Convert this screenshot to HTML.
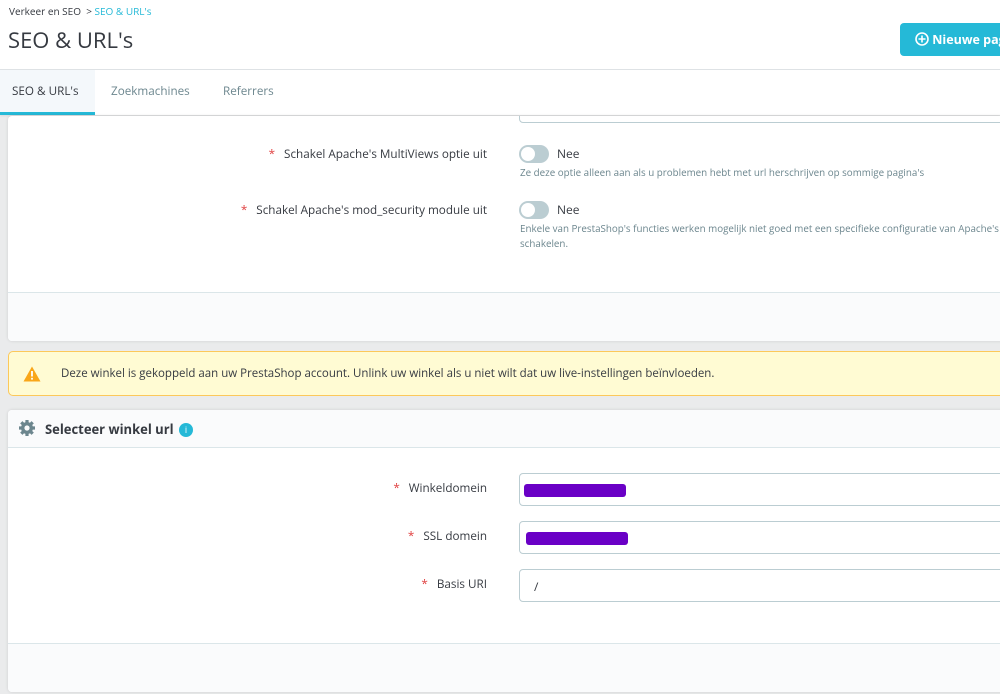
<!DOCTYPE html>
<html><head><meta charset="utf-8"><style>
*{box-sizing:border-box;margin:0;padding:0}
body{width:1000px;height:694px;overflow:hidden;background:#eaebec;font-family:"Open Sans","Liberation Sans",sans-serif;color:#363a41;position:relative}
.abs{position:absolute}
.hdr{left:0;top:0;width:1000px;height:70px;background:#fff;border-bottom:1px solid #dfe3e6}
.tabs{left:0;top:70px;width:1000px;height:45px;background:#fff;box-shadow:0 1px 2px rgba(0,0,0,.08)}
.panel{background:#fff;border-radius:4px 0 0 4px;box-shadow:0 0 3px rgba(0,0,0,.12)}
.lbl{font-size:11.7px;color:#363a41;text-align:right;width:479px;left:8px}
.req{color:#e04040;margin-right:9px}
.sw{width:30px;height:18px;border-radius:9px;background:#bbcdd2;left:519px}
.sw:after{content:"";position:absolute;left:2px;top:2px;width:14px;height:14px;border-radius:50%;background:#fff}
.nee{left:557px;font-size:12px}
.help{left:520px;font-size:9.8px;color:#6c868e;line-height:15px}
.inp{left:519px;width:500px;height:33px;border:1px solid #bbcdd2;border-radius:4px;background:#fff}
.mark{background:#6a00c6;height:13px;border-radius:3px}
</style></head><body>
<div class="abs hdr">
 <div class="abs" style="left:9px;top:4px;font-size:10px;color:#363a41">Verkeer en SEO &nbsp;&gt; <span style="color:#25b9d7">SEO &amp; URL's</span></div>
 <div class="abs" style="left:8px;top:25px;font-size:22px;color:#363a41">SEO &amp; URL's</div>
 <div class="abs" style="left:900px;top:23px;width:110px;height:33px;background:#25b9d7;border-radius:4px;color:#fff;font-size:12.5px;font-weight:bold;padding:8px 0 0 15px;white-space:nowrap">
  <svg width="14" height="14" viewBox="0 0 14 14" style="vertical-align:-2px"><circle cx="7" cy="7" r="6" fill="none" stroke="#fff" stroke-width="1.6"/><path d="M7 3.5v7M3.5 7h7" stroke="#fff" stroke-width="1.6"/></svg> Nieuwe pagina</div>
</div>
<div class="abs tabs">
 <div class="abs" style="left:0;top:0;width:95px;height:45px;background:#f4f8fb;border-bottom:3px solid #25b9d7"></div>
 <div class="abs" style="left:12px;top:13px;font-size:11.7px;color:#363a41">SEO &amp; URL's</div>
 <div class="abs" style="left:111px;top:13px;font-size:11.7px;color:#6c868e">Zoekmachines</div>
 <div class="abs" style="left:223px;top:13px;font-size:11.7px;color:#6c868e">Referrers</div>
</div>
<div class="abs panel" style="left:8px;top:116px;width:1000px;height:225px;overflow:hidden">
 <div class="abs" style="left:511px;top:-20px;width:500px;height:27px;border:1px solid #bbcdd2;border-radius:4px"></div>
 <div class="abs" style="left:0;top:176px;width:1000px;height:49px;background:#fafbfc;border-top:1px solid #dbe6e9"></div>
</div>
<div class="abs lbl" style="top:146px"><span class="req">*</span>Schakel Apache's MultiViews optie uit</div>
<div class="abs sw" style="top:145px"></div><div class="abs nee" style="top:145px">Nee</div>
<div class="abs help" style="top:165px">Ze deze optie alleen aan als u problemen hebt met url herschrijven op sommige pagina's</div>
<div class="abs lbl" style="top:202px"><span class="req">*</span>Schakel Apache's mod_security module uit</div>
<div class="abs sw" style="top:201px"></div><div class="abs nee" style="top:201px">Nee</div>
<div class="abs help" style="top:221px;white-space:nowrap">Enkele van PrestaShop's functies werken mogelijk niet goed met een specifieke configuratie van Apache's<br>schakelen.</div>
<div class="abs" style="left:8px;top:351px;width:1010px;height:45px;background:#fffbd3;border:1px solid #fcc85a;border-radius:5px">
 <svg class="abs" style="left:14px;top:14px" width="18" height="16" viewBox="0 0 18 16"><path d="M9 0.5L17.5 15.5H0.5Z" fill="#f9a619"/><rect x="8.1" y="5" width="1.8" height="5.5" fill="#fff"/><rect x="8.1" y="11.8" width="1.8" height="1.8" fill="#fff"/></svg>
 <div class="abs" style="left:52px;top:14px;font-size:11.5px;color:#363a41;white-space:nowrap">Deze winkel is gekoppeld aan uw PrestaShop account. Unlink uw winkel als u niet wilt dat uw live-instellingen beïnvloeden.</div>
</div>
<div class="abs panel" style="left:8px;top:410px;width:1000px;height:282px;overflow:hidden">
 <div class="abs" style="left:0;top:0;width:1000px;height:38px;background:#fafbfc;border-bottom:1px solid #dbe6e9"></div>
 <svg class="abs" style="left:10px;top:9px" width="18" height="18" viewBox="0 0 18 18"><g fill="#6c868e"><circle cx="9" cy="9" r="6"/><g stroke="#6c868e" stroke-width="3.2"><path d="M9 1v16M1 9h16M3.3 3.3l11.4 11.4M14.7 3.3L3.3 14.7"/></g></g><circle cx="9" cy="9" r="2.6" fill="#fafbfc"/></svg>
 <div class="abs" style="left:37px;top:10px;font-size:13px;font-weight:bold;color:#363a41">Selecteer winkel url</div>
 <div class="abs" style="left:171px;top:13px;width:14px;height:14px;border-radius:50%;background:#25b9d7;color:#fff;font-size:9px;text-align:center;line-height:14px">i</div>
 <div class="abs" style="left:0;top:233px;width:1000px;height:49px;background:#fafbfc;border-top:1px solid #dbe6e9"></div>
</div>
<div class="abs lbl" style="top:480px"><span class="req">*</span>Winkeldomein</div>
<div class="abs inp" style="top:473px"><div class="abs mark" style="left:4px;top:10px;width:102px"></div></div>
<div class="abs lbl" style="top:528px"><span class="req">*</span>SSL domein</div>
<div class="abs inp" style="top:521px"><div class="abs mark" style="left:6px;top:10px;width:102px"></div></div>
<div class="abs lbl" style="top:576px"><span class="req">*</span>Basis URI</div>
<div class="abs inp" style="top:569px"><div class="abs" style="left:14px;top:8px;font-size:12px">/</div></div>
</body></html>
